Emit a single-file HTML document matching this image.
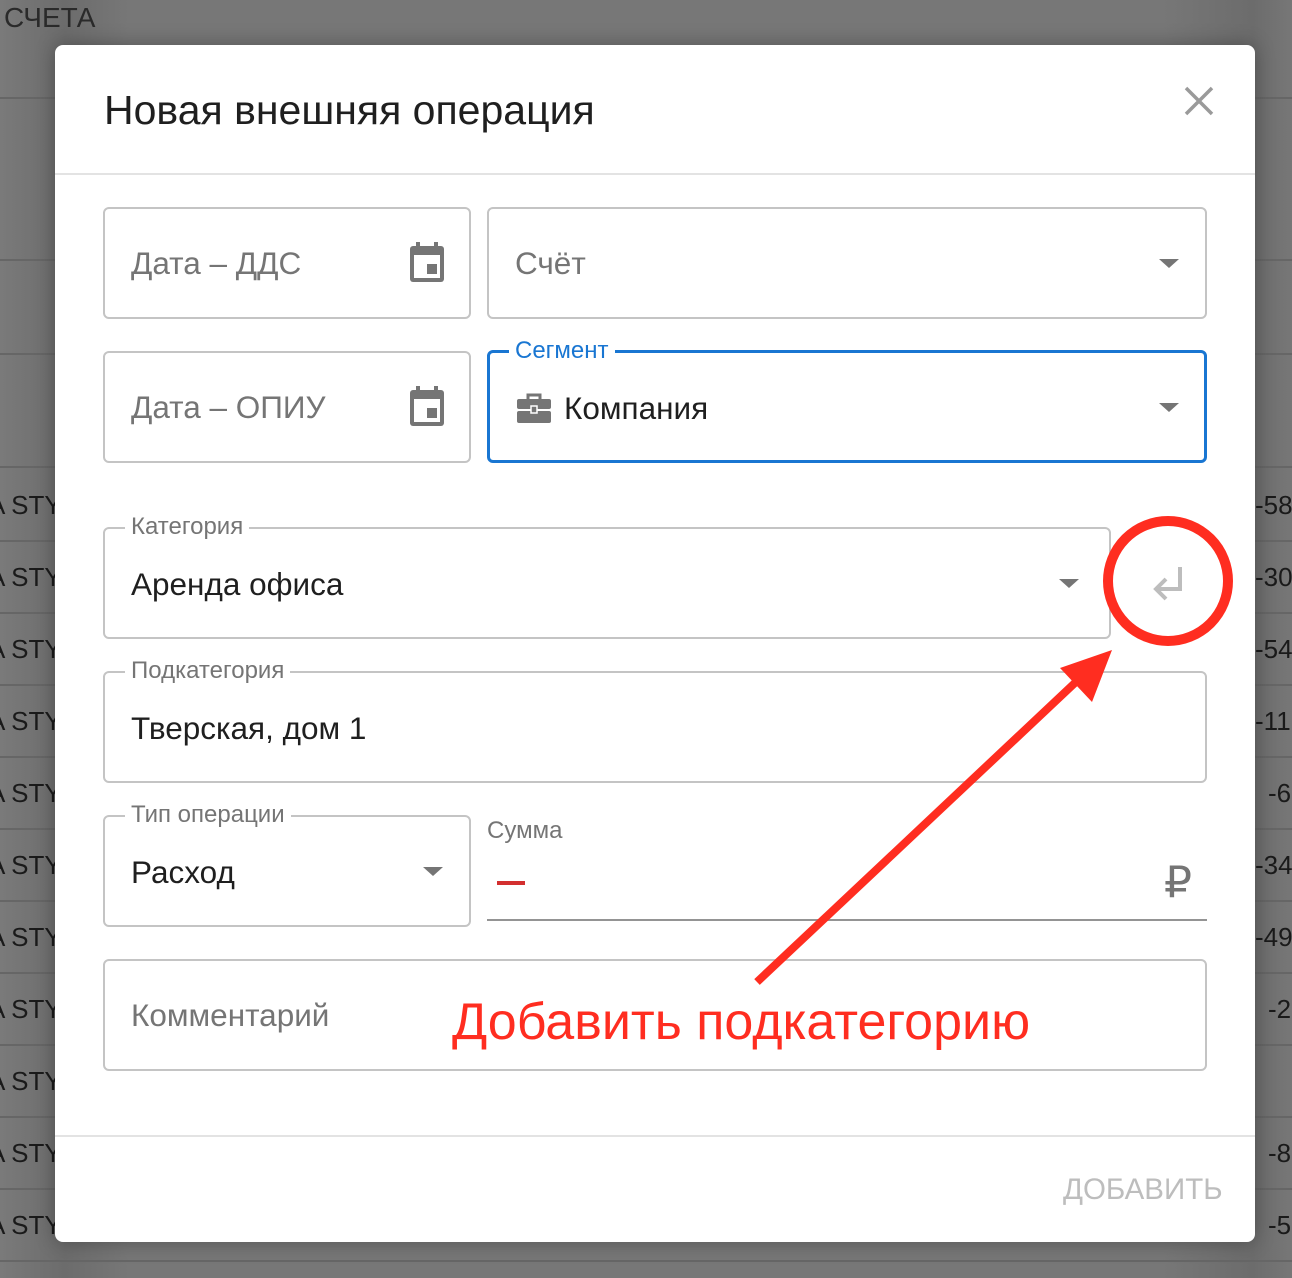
<!DOCTYPE html>
<html><head><meta charset="utf-8"><style>
*{box-sizing:border-box;margin:0;padding:0}
body{width:1292px;height:1278px;position:relative;overflow:hidden;background:#777;font-family:"Liberation Sans","DejaVu Sans",sans-serif}
.a{position:absolute}
.hl{position:absolute;left:0;width:1292px;height:2px;background:#666}
.bt{position:absolute;font-size:26px;color:#1a1a1a}
.modal{position:absolute;left:55px;top:45px;width:1200px;height:1197px;background:#fff;border-radius:8px;box-shadow:0 0 20px rgba(0,0,0,.3)}
.f{position:absolute;border:2px solid #c4c4c4;border-radius:6px;background:#fff}
.ph{position:absolute;font-size:31.5px;color:#757575}
.val{position:absolute;font-size:31.5px;color:#1f1f1f}
.lab{position:absolute;font-size:24px;color:#757575;background:#fff;padding:0 6px}
.tri{position:absolute;width:0;height:0;border-left:10px solid transparent;border-right:10px solid transparent;border-top:9px solid #757575}
</style></head><body>
<div class="a" style="left:0;top:0;width:1292px;height:1278px;background:linear-gradient(90deg,#7a7a7a,#6c6c6c 5%,#777 10%,#777 90%,#6c6c6c 97%,#777)"></div>
<div class="a" style="left:4px;top:2px;font-size:28px;color:#2a2a2a">СЧЕТА</div>
<div class="hl" style="top:97px"></div><div class="hl" style="top:259px"></div><div class="hl" style="top:353px"></div><div class="hl" style="top:466px"></div>
<div class="hl" style="top:540px"></div><div class="hl" style="top:612px"></div><div class="hl" style="top:684px"></div><div class="hl" style="top:756px"></div><div class="hl" style="top:828px"></div><div class="hl" style="top:900px"></div><div class="hl" style="top:972px"></div><div class="hl" style="top:1044px"></div><div class="hl" style="top:1116px"></div><div class="hl" style="top:1188px"></div><div class="hl" style="top:1260px"></div>
<div class="bt" style="left:-12px;top:490px">A STY</div><div class="bt" style="left:-12px;top:562px">A STY</div><div class="bt" style="left:-12px;top:634px">A STY</div><div class="bt" style="left:-12px;top:706px">A STY</div><div class="bt" style="left:-12px;top:778px">A STY</div><div class="bt" style="left:-12px;top:850px">A STY</div><div class="bt" style="left:-12px;top:922px">A STY</div><div class="bt" style="left:-12px;top:994px">A STY</div><div class="bt" style="left:-12px;top:1066px">A STY</div><div class="bt" style="left:-12px;top:1138px">A STY</div><div class="bt" style="left:-12px;top:1210px">A STY</div>
<div class="bt" style="left:1255px;top:490px">-58</div><div class="bt" style="left:1255px;top:562px">-30</div><div class="bt" style="left:1255px;top:634px">-54</div><div class="bt" style="left:1255px;top:706px">-11</div><div class="bt" style="left:1268px;top:778px">-6</div><div class="bt" style="left:1255px;top:850px">-34</div><div class="bt" style="left:1255px;top:922px">-49</div><div class="bt" style="left:1268px;top:994px">-2</div><div class="bt" style="left:1268px;top:1138px">-8</div><div class="bt" style="left:1268px;top:1210px">-5</div>

<div class="modal">
<div class="a" style="left:49px;top:42px;font-size:41px;color:#1f1f1f">Новая внешняя операция</div>
<svg class="a" style="left:1128px;top:40px" width="32" height="32" viewBox="0 0 32 32"><path d="M3 3L29 29M29 3L3 29" stroke="#9a9a9a" stroke-width="3.5"/></svg>
<div class="a" style="left:0;top:128px;width:1200px;height:2px;background:#e3e3e3"></div>
<div class="a" style="left:0;top:1090px;width:1200px;height:2px;background:#e3e3e3"></div>
<div class="a" style="left:1008px;top:1128px;font-size:29.5px;color:#bdbdbd">ДОБАВИТЬ</div>
</div>

<div class="f" style="left:103px;top:207px;width:368px;height:112px"></div>
<div class="ph" style="left:131px;top:245px">Дата – ДДС</div>
<svg class="a" style="left:409px;top:242px" width="36" height="40" viewBox="0 0 36 40"><rect x="7" y="0" width="4" height="7" fill="#757575"/><rect x="25" y="0" width="4" height="7" fill="#757575"/><rect x="1" y="4" width="34" height="36" rx="3" fill="#757575"/><rect x="5" y="13" width="26" height="23" fill="#fff"/><rect x="18" y="22" width="10" height="10" fill="#757575"/></svg>
<div class="f" style="left:487px;top:207px;width:720px;height:112px"></div>
<div class="ph" style="left:515px;top:245px">Счёт</div>
<div class="tri" style="left:1159px;top:259px"></div>

<div class="f" style="left:103px;top:351px;width:368px;height:112px"></div>
<div class="ph" style="left:131px;top:389px">Дата – ОПИУ</div>
<svg class="a" style="left:409px;top:386px" width="36" height="40" viewBox="0 0 36 40"><rect x="7" y="0" width="4" height="7" fill="#757575"/><rect x="25" y="0" width="4" height="7" fill="#757575"/><rect x="1" y="4" width="34" height="36" rx="3" fill="#757575"/><rect x="5" y="13" width="26" height="23" fill="#fff"/><rect x="18" y="22" width="10" height="10" fill="#757575"/></svg>
<div class="f" style="left:487px;top:350px;width:720px;height:113px;border:3px solid #1976d2"></div>
<div class="lab" style="left:509px;top:337px;color:#1976d2">Сегмент</div>
<svg class="a" style="left:517px;top:393px" width="34" height="30" viewBox="0 0 34 30"><path d="M11 6V2h12v4" stroke="#757575" stroke-width="3" fill="none"/><rect x="0" y="6" width="34" height="10" rx="2" fill="#757575"/><rect x="0" y="18" width="34" height="12" rx="2" fill="#757575"/><rect x="14" y="13" width="6" height="7" fill="#757575" stroke="#fff" stroke-width="1.5"/></svg>
<div class="val" style="left:564px;top:390px">Компания</div>
<div class="tri" style="left:1159px;top:403px"></div>

<div class="f" style="left:103px;top:527px;width:1008px;height:112px"></div>
<div class="lab" style="left:125px;top:513px">Категория</div>
<div class="val" style="left:131px;top:566px">Аренда офиса</div>
<div class="tri" style="left:1059px;top:579px"></div>
<svg class="a" style="left:1150px;top:565px" width="36" height="36" viewBox="0 0 36 36"><path d="M30 2V24H7M16 14L6 24L16 34" stroke="#bdbdbd" stroke-width="4" fill="none"/></svg>

<div class="f" style="left:103px;top:671px;width:1104px;height:112px"></div>
<div class="lab" style="left:125px;top:657px">Подкатегория</div>
<div class="val" style="left:131px;top:710px">Тверская, дом 1</div>

<div class="f" style="left:103px;top:815px;width:368px;height:112px"></div>
<div class="lab" style="left:125px;top:801px">Тип операции</div>
<div class="val" style="left:131px;top:854px">Расход</div>
<div class="tri" style="left:423px;top:867px"></div>

<div class="a" style="left:487px;top:817px;font-size:24px;color:#757575">Сумма</div>
<div class="a" style="left:497px;top:881px;width:28px;height:4px;background:#d32f2f"></div>
<div class="a" style="left:1164px;top:857px;font-size:44px;color:#757575">₽</div>
<div class="a" style="left:487px;top:919px;width:720px;height:2px;background:#949494"></div>

<div class="f" style="left:103px;top:959px;width:1104px;height:112px"></div>
<div class="ph" style="left:131px;top:997px">Комментарий</div>

<svg class="a" style="left:0;top:0" width="1292" height="1278" viewBox="0 0 1292 1278">
<circle cx="1168" cy="581" r="60" stroke="#ff2d20" stroke-width="10" fill="none"/>
<line x1="757" y1="982" x2="1078" y2="680" stroke="#ff2d20" stroke-width="8"/>
<polygon points="1112,650 1092,702 1060,668" fill="#ff2d20"/>
</svg>
<div class="a" style="left:452px;top:992px;font-size:52px;color:#ff2d20">Добавить подкатегорию</div>
</body></html>
